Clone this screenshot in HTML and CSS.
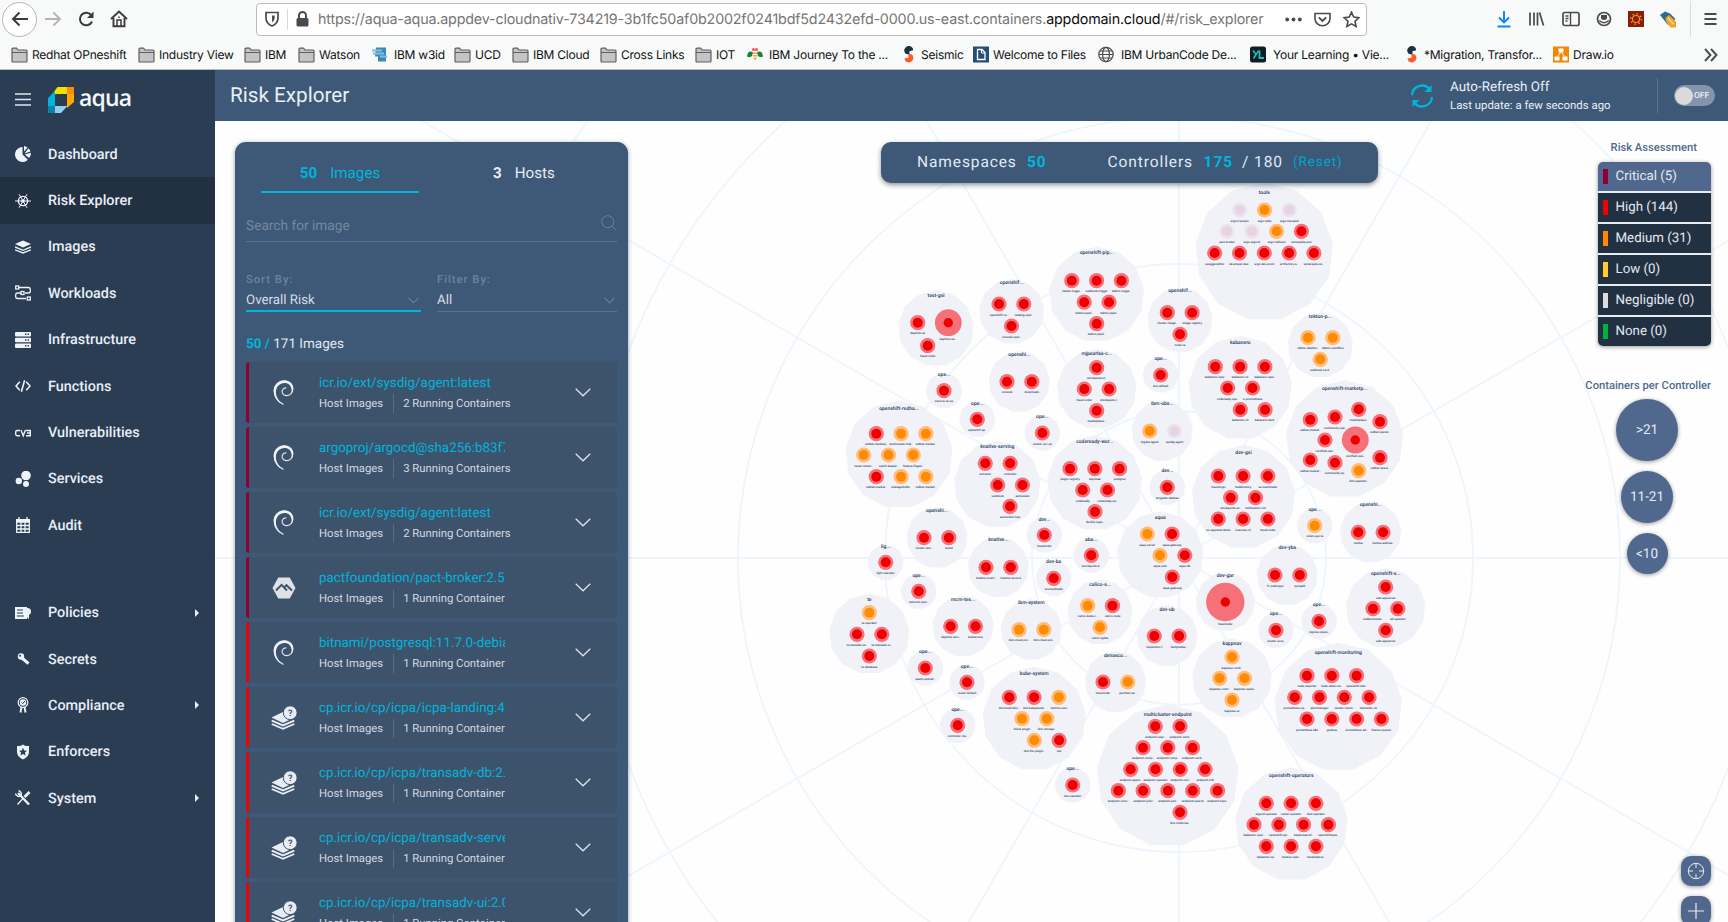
FILE: index.html
```html
<!DOCTYPE html>
<html lang="en">
<head>
<meta charset="utf-8">
<title>Risk Explorer</title>
<link rel="stylesheet" href="styles.css">
</head>
<body>
<svg class="defs" width="0" height="0" aria-hidden="true">
  <symbol id="i-folder" viewBox="0 0 17 16"><path d="M1 14V2.2Q1 1.2 2 1.2H5.6L7 3H15Q16 3 16 4V14Q16 15 15 15H2Q1 15 1 14Z" fill="#c4c4c4" stroke="#5f5f5f" stroke-width="1.2"/><path d="M1 5.5H16" stroke="#5f5f5f"/></symbol>
  <symbol id="i-seismic" viewBox="0 0 17 18"><path d="M13 4.5A4.8 4.8 0 1 0 5 8.3L9 9.2V5.5Z" fill="#1a3048"/><path d="M3.6 13.3A4.8 4.8 0 1 0 11.2 8.8L8 8.6V12.5Z" fill="#ff5a26"/></symbol>
  <symbol id="i-chev" viewBox="0 0 16 9"><path d="M.7.7 8 7.8 15.3.7" fill="none" stroke="currentColor" stroke-width="1.2"/></symbol>
  <symbol id="i-debian" viewBox="0 0 21 25"><path d="M10.500 24.500C3.800 21.500.600 15 1.400 9 2.300 3.500 7.500.300 12.500 1c4.500.600 7.500 4 7.300 8-.300 4-3 7-6.800 6.600-3-.400-4.500-3-3.600-5.400.700-1.800 2.300-2.500 4-2.200" fill="none" stroke="#dfe5ee" stroke-width="1.100"/><path d="M10.500 24.700C3.500 22 .200 15.500.800 9.300 1.600 3.500 7 0 12.500.500c5 .600 8 4.200 7.700 9-.300 2.500-1.300 4.300-2.400 5.200.700-1.500 1-3.200.800-5C18.200 5.500 15.500 2.900 11.600 2.900 6.500 3 3.200 6.800 2.900 11.500 2.700 17 5.800 21.800 10.500 24.700Z" fill="#eef2f7"/></symbol>
  <symbol id="i-alpine" viewBox="0 0 24 22"><path d="M6.300.5H17.700L23.500 11 17.700 21.500H6.300L.500 11Z" fill="#dfe2e6"/><path d="M4 13.500 9.500 7.800 15 13.500M12.500 10.200 14.500 8.200 20 13.500" fill="none" stroke="#3c5269" stroke-width="1.900"/></symbol>
  <symbol id="i-stackq" viewBox="0 0 26 24"><path d="M.500 11.500 12 6 23.500 11.500 12 17Z" fill="#e8edf5"/><path d="M.700 14.600 12 19.400 23.300 14.600M.700 18 12 22.800 23.300 18" fill="none" stroke="#e8edf5" stroke-width="1.900"/><circle cx="19.200" cy="6.700" r="6.900" fill="#e8edf5" stroke="#3c5269" stroke-width="1"/><text x="19.200" y="10" class="q-mark">?</text></symbol>
</svg>

<header class="browser">
  <div class="nav-row">
    <span class="back"><svg width="18" height="16" viewBox="0 0 18 16"><path d="M17 8H2M8.500 1.500 2 8 8.500 14.500" fill="none" stroke="#3b3b3b" stroke-width="2"/></svg></span>
    <svg class="fwd" width="18" height="16" viewBox="0 0 18 16"><path d="M1 8H16M9.500 1.500 16 8 9.500 14.500" fill="none" stroke="#b4b4b4" stroke-width="1.800"/></svg>
    <svg class="reload" width="17" height="16" viewBox="0 0 17 16"><path d="M13.500 4.500A6.300 6.300 0 1 0 14 10.500" fill="none" stroke="#3b3b3b" stroke-width="2"/><path d="M15.500.500V7H9Z" fill="#3b3b3b"/></svg>
    <svg class="home" width="18" height="18" viewBox="0 0 18 18"><path d="M1 9 9 1.500 17 9M3.500 8V16.200H14.500V8" fill="none" stroke="#3b3b3b" stroke-width="1.900"/><path d="M7 16V10H11V16M9 6.500V8" stroke="#3b3b3b" stroke-width="1.500" fill="none"/></svg>
    <div class="url-box">
      <svg class="shield" width="14" height="16" viewBox="0 0 14 16"><path d="M1 1.500H13V7Q13 12.500 7 15 1 12.500 1 7Z" fill="none" stroke="#4a4a4a" stroke-width="1.700"/><path d="M7 4.500V11.500Q9.700 9.500 9.700 7V4.500Z" fill="#4a4a4a"/></svg>
      <span class="url-sep"></span>
      <svg class="lock" width="13" height="16" viewBox="0 0 13 16"><rect x=".5" y="7" width="12" height="8.500" rx="1.500" fill="#4a4a4a"/><path d="M3 8V4.500a3.500 3.500 0 0 1 7 0V8" fill="none" stroke="#4a4a4a" stroke-width="2"/></svg>
      <span class="url">https://aqua-aqua.appdev-cloudnativ-734219-3b1fc50af0b2002f0241bdf5d2432efd-0000.us-east.containers.<b>appdomain.cloud</b>/#/risk_explorer</span>
      <span class="url-tools">
        <svg width="17" height="5" viewBox="0 0 17 5"><g fill="#4a4a4a"><circle cx="2.200" cy="2.500" r="1.900"/><circle cx="8.500" cy="2.500" r="1.900"/><circle cx="14.800" cy="2.500" r="1.900"/></g></svg>
        <svg width="17" height="15" viewBox="0 0 17 15"><path d="M1 1.500H16V6.500A7.500 7.300 0 0 1 1 6.500Z" fill="none" stroke="#4a4a4a" stroke-width="1.600"/><path d="M4.800 5.300 8.500 9 12.200 5.300" fill="none" stroke="#4a4a4a" stroke-width="1.900"/></svg>
        <svg width="17" height="17" viewBox="0 0 17 17"><path d="M8.500 1.300 10.700 6.100 15.900 6.700 12 10.200 13.100 15.400 8.500 12.800 3.900 15.400 5 10.200 1.100 6.700 6.300 6.100Z" fill="none" stroke="#4a4a4a" stroke-width="1.600"/></svg>
      </span>
    </div>
    <div class="ext">
      <svg width="16" height="18" viewBox="0 0 16 18"><path d="M8 1V12M3 7.500 8 12.500 13 7.500M1.500 16.500H14.500" fill="none" stroke="#0a84ff" stroke-width="1.900"/></svg>
      <svg width="17" height="16" viewBox="0 0 17 16"><path d="M2 1.500V14.500M6 1.500V14.500M9.500 1.500V14.500M11.500 1.500 15.500 14.500" fill="none" stroke="#4a4a4a" stroke-width="1.700"/></svg>
      <svg width="18" height="16" viewBox="0 0 18 16"><rect x="1" y="1.500" width="16" height="13" rx="1.800" fill="none" stroke="#4a4a4a" stroke-width="1.700"/><path d="M8.500 1.500V14.500M3.500 5H6.500M3.500 7.500H6.500M3.500 10H5.500" stroke="#4a4a4a" stroke-width="1.400"/></svg>
      <svg width="16" height="16" viewBox="0 0 16 16"><circle cx="8" cy="8" r="6.500" fill="none" stroke="#4a4a4a" stroke-width="1.700"/><path d="M5 4H11V6.500Q11 9 8 9 5 9 5 6.500Z" fill="#4a4a4a"/><path d="M3.300 9.500Q8 14 12.700 9.500" fill="none" stroke="#4a4a4a" stroke-width="1.300"/></svg>
      <svg width="16" height="16" viewBox="0 0 16 16"><rect width="16" height="16" fill="#8a1c08"/><circle cx="8" cy="8" r="3.500" fill="none" stroke="#e8902a" stroke-width="1.200"/><circle cx="8" cy="8" r="5.200" fill="none" stroke="#e8902a" stroke-width="1.800" stroke-dasharray="1.300 2.780"/></svg>
      <svg width="17" height="17" viewBox="0 0 17 17"><path d="M0 4 5 .500 10 2.500 15.500 8 8 14Z" fill="#2e6c8f"/><path d="M5.500 7 9 4 16 10.500V16.500H10.500Q5.500 11 5.500 7Z" fill="#f3a32c"/><path d="M8 7 13.500 13" stroke="#fbd88a" stroke-width="1.500"/></svg>
      <span class="ext-sep"></span>
      <svg width="13" height="14" viewBox="0 0 13 14"><path d="M.500 2H12.500M.500 7H12.500M.500 12H12.500" stroke="#4a4a4a" stroke-width="1.900"/></svg>
    </div>
  </div>
  <nav class="bookmarks">
    <span><svg class="fold"><use href="#i-folder"/></svg>Redhat OPneshift</span>
    <span><svg class="fold"><use href="#i-folder"/></svg>Industry View</span>
    <span><svg class="fold"><use href="#i-folder"/></svg>IBM</span>
    <span><svg class="fold"><use href="#i-folder"/></svg>Watson</span>
    <span><svg class="fav w3" viewBox="0 0 16 16"><path d="M4 1H14V15H6V10H3Z" fill="#3f87b5"/><path d="M0 4H10M1 7H12M8 10H15" stroke="#7fc0e6" stroke-width="2"/></svg>IBM w3id</span>
    <span><svg class="fold"><use href="#i-folder"/></svg>UCD</span>
    <span><svg class="fold"><use href="#i-folder"/></svg>IBM Cloud</span>
    <span><svg class="fold"><use href="#i-folder"/></svg>Cross Links</span>
    <span><svg class="fold"><use href="#i-folder"/></svg>IOT</span>
    <span><svg class="fav bee" viewBox="0 0 16 16"><path d="M6 6Q1 3 0 10Q4 12 6 8ZM10 6Q15 3 16 10Q12 12 10 8Z" fill="#198038"/><path d="M5.500 6H10.500L10 11 8 14 6 11Z" fill="#f4a545"/><path d="M5.500 8H10.500M6 10.500H10" stroke="#fff"/><circle cx="6.500" cy="3" r="1.600" fill="#ee5a5a"/><circle cx="9.500" cy="3" r="1.600" fill="#ee5a5a"/></svg>IBM Journey To the ...</span>
    <span><svg class="fav"><use href="#i-seismic"/></svg>Seismic</span>
    <span><svg class="fav wf" viewBox="0 0 16 16"><rect width="16" height="16" fill="#255074"/><path d="M4.500 3H9L12 6V13H4.500Z" fill="none" stroke="#fff" stroke-width="1.300"/><path d="M8.500 3V6.500H12" fill="none" stroke="#fff"/></svg>Welcome to Files</span>
    <span><svg class="fav globe" viewBox="0 0 16 16"><g fill="none" stroke="#4a4a4a" stroke-width="1.200"><circle cx="8" cy="8" r="7.200"/><ellipse cx="8" cy="8" rx="3.400" ry="7.200"/><path d="M1 8H15M2 4.500H14M2 11.500H14"/></g></svg>IBM UrbanCode De...</span>
    <span><svg class="fav yl" viewBox="0 0 16 16"><rect width="16" height="16" rx="2.500" fill="#141b24"/><path d="M3 4 6 8 9 4M6 8 3.500 12" fill="none" stroke="#14c4b8" stroke-width="1.600"/><path d="M9.500 4V11.500H14" fill="none" stroke="#14c4b8" stroke-width="1.800"/></svg>Your Learning • Vie...</span>
    <span><svg class="fav"><use href="#i-seismic"/></svg>*Migration, Transfor...</span>
    <span><svg class="fav" viewBox="0 0 16 16"><rect width="16" height="16" fill="#f08705"/><g fill="#fff"><rect x="5.500" y="2" width="5" height="4"/><rect x="1.500" y="10" width="5" height="4"/><rect x="9.500" y="10" width="5" height="4"/></g><path d="M7.500 6 4.500 10M8.500 6 11.500 10" stroke="#fff"/></svg>Draw.io</span>
    <svg class="more" width="14" height="14" viewBox="0 0 14 14"><path d="M1 1 6.500 7 1 13M7 1 12.500 7 7 13" fill="none" stroke="#4a4a4a" stroke-width="1.900"/></svg>
  </nav>
</header>

<div class="app">
  <aside class="side">
    <div class="brand">
      <svg width="16" height="13" viewBox="0 0 16 13"><path d="M0 1H16M0 6.500H16M0 12H16" stroke="#dfe6f0" stroke-width="1.600"/></svg>
      <svg class="logo" width="26" height="26" viewBox="0 0 26 26"><path d="M9.500 0H19V7H8L3 9Z" fill="#f2e200"/><path d="M19 0H26V7H19Z" fill="#ff8c00"/><path d="M19 7H26V15L19 21Z" fill="#ffaa00"/><path d="M0 11 7 4V19H0Z" fill="#00b4d8"/><path d="M0 19H7V26H0Z" fill="#0e7fa6"/><path d="M7 19H19.500L13 26H7Z" fill="#8fd0f2"/></svg>
      <span class="word">aqua</span>
    </div>
    <ul class="menu">
      <li><svg viewBox="0 0 16 16"><path d="M7.500 1V8.500L12.800 13.800A7.500 7.500 0 1 1 7.500 1Z"/><path d="M9 0A7 7 0 0 1 12.500 1.500L9 5.500ZM13.400 2.300A7 7 0 0 1 15.500 5.500L9.500 7.500ZM15.900 6.700A7 7 0 0 1 14 12L9.800 8.500Z"/></svg>Dashboard</li>
      <li class="on"><svg viewBox="0 0 16 16"><circle cx="8" cy="8" r="4.600" fill="none" stroke="#eef2f9" stroke-width="1.400"/><circle cx="8" cy="8" r="1.800"/><path d="M0 8H16M4 1.200 12 14.800M12 1.200 4 14.800" stroke="#eef2f9" stroke-width="1"/></svg>Risk Explorer</li>
      <li><svg viewBox="0 0 16 16"><path d="M0 5 8 1.500 16 5 8 8.500Z"/><path d="M0 8 8 11.300 16 8M0 10.800 8 14 16 10.800" fill="none" stroke="#eef2f9" stroke-width="1.400"/></svg>Images</li>
      <li><svg viewBox="0 0 16 16"><g fill="none" stroke="#eef2f9" stroke-width="1.300"><rect x=".7" y="1" width="3" height="3"/><rect x="6" y="6.500" width="3" height="3"/><rect x="12.300" y="12" width="3" height="3"/><path d="M4 2.500H13.500Q15.300 2.500 15.300 5V6Q15.300 8 13.500 8H10M6 8H2.500Q.700 8 .700 10V11.500Q.700 13.500 2.500 13.500H11"/></g></svg>Workloads</li>
      <li><svg viewBox="0 0 16 16"><rect width="16" height="4.500" rx="1"/><rect y="5.800" width="16" height="4.500" rx="1"/><rect y="11.500" width="16" height="4.500" rx="1"/><path d="M10 2.200H14M10 8H14M10 13.800H14" stroke="#2a3d52" stroke-width="1.400" stroke-dasharray="1.400 1.200"/></svg>Infrastructure</li>
      <li><svg viewBox="0 0 16 16"><path d="M4.800 3.800 1 8 4.800 12.200M11.200 3.800 15 8 11.200 12.200M9.600 2.200 6.400 13.800" fill="none" stroke="#eef2f9" stroke-width="1.600"/></svg>Functions</li>
      <li><svg viewBox="0 0 16 16"><path d="M5 5.500H2Q.700 5.500.700 7V9Q.700 10.700 2 10.700H5M6 5 8.200 10.700 10.400 5M11 5.500H15.300V10.700H11M12 8H15" fill="none" stroke="#eef2f9" stroke-width="1.400"/></svg>Vulnerabilities</li>
      <li><svg viewBox="0 0 16 16"><circle cx="11" cy="4.500" r="4.800"/><circle cx="3.800" cy="10" r="3.200"/><circle cx="11" cy="13" r="3"/></svg>Services</li>
      <li><svg viewBox="0 0 16 16"><path d="M1 2H15V5H1Z"/><path d="M4 0V3M12 0V3M1.700 5H14.300V15.300H1.700Z M2 8.500H14M2 12H14M6 5V15M10 5V15" fill="none" stroke="#eef2f9" stroke-width="1.300"/></svg>Audit</li>
    </ul>
    <ul class="menu second">
      <li><svg viewBox="0 0 16 16"><path d="M0 2H12V14H0Z"/><circle cx="12.500" cy="6.500" r="3.500"/><path d="M11 9H14V14L12.500 13Z"/><path d="M2 5H8M2 8H8M2 11H9" stroke="#2a3d52" stroke-width="1"/></svg>Policies<i class="arr"></i></li>
      <li><svg viewBox="0 0 16 16"><circle cx="6" cy="5.500" r="3.200"/><path d="M7 7 13.500 12.700" stroke="#eef2f9" stroke-width="3"/><circle cx="5" cy="4.800" r="1" fill="#2a3d52"/></svg>Secrets</li>
      <li><svg viewBox="0 0 16 16"><circle cx="8" cy="5.500" r="4.800" fill="none" stroke="#eef2f9" stroke-width="1.200"/><circle cx="8" cy="5.500" r="3.200"/><path d="M6.500 5.500 7.700 6.700 10 4" fill="none" stroke="#2a3d52" stroke-width="1"/><path d="M6.500 10 5.500 15.500M9.500 10 10.500 15.500" stroke="#eef2f9" stroke-width="2"/></svg>Compliance<i class="arr"></i></li>
      <li><svg viewBox="0 0 16 16"><path d="M2 2Q6 2.500 8 .500 10 2.500 14 2V8Q14 13 8 15.500 2 13 2 8Z"/><path d="M8 3.800 9.200 6.500 12 6.700 9.900 8.600 10.600 11.400 8 9.900 5.400 11.400 6.100 8.600 4 6.700 6.800 6.500Z" fill="#2a3d52"/></svg>Enforcers</li>
      <li><svg viewBox="0 0 16 16"><path d="M3 3 14 14.500" stroke="#eef2f9" stroke-width="2.400"/><path d="M2.500 14.500 8 8.500" stroke="#eef2f9" stroke-width="1.300"/><path d="M9.500 7 14.500 2" stroke="#eef2f9" stroke-width="2.800"/><path d="M.500 3.500A3.300 3.300 0 0 0 6 5.500M3.500 .800A3.300 3.300 0 0 1 6 5.500" fill="none" stroke="#eef2f9" stroke-width="1.500"/></svg>System<i class="arr"></i></li>
    </ul>
  </aside>

  <div class="content">
    <header class="bar">
      <h1>Risk Explorer</h1>
      <svg class="sync" width="24" height="24" viewBox="0 0 24 24"><path d="M2 11A10 10 0 0 1 19.500 5M22 13A10 10 0 0 1 4.500 19" fill="none" stroke="#00b4dc" stroke-width="2.300"/><path d="M21.500 1V8H14.500ZM2.500 23V16H9.500Z" fill="#00b4dc"/></svg>
      <div class="sync-text"><div class="l1">Auto-Refresh Off</div><div class="l2">Last update: a few seconds ago</div></div>
      <div class="toggle-wrap"><span class="toggle"><i></i>OFF</span></div>
    </header>

    <main class="stage">
      <svg id="map" class="map" viewBox="215 121 1513 801"></svg>

      <section class="panel">
        <div class="tabs">
          <span class="tab act"><b>50</b>Images</span>
          <span class="tab"><b>3</b>Hosts</span>
        </div>
        <div class="search">Search for image
          <svg width="16" height="16" viewBox="0 0 16 16"><circle cx="6.700" cy="6.700" r="6" fill="none" stroke="#6a819a"/><path d="M11 11 15.500 15.500" stroke="#6a819a"/></svg>
        </div>
        <div class="selects">
          <div class="sel hot"><label>Sort By:</label><div>Overall Risk<svg class="sc"><use href="#i-chev"/></svg></div></div>
          <div class="sel"><label>Filter By:</label><div>All<svg class="sc"><use href="#i-chev"/></svg></div></div>
        </div>
        <div class="count"><b>50 /</b> 171 Images</div>
        <div class="cards">
          <article class="card crit"><svg class="deb"><use href="#i-debian"/></svg><div class="info"><div class="nm">icr.io/ext/sysdig/agent:latest</div><div class="sub"><span>Host Images</span><span>2 Running Containers</span></div></div><svg class="cv"><use href="#i-chev"/></svg></article>
          <article class="card crit"><svg class="deb"><use href="#i-debian"/></svg><div class="info"><div class="nm">argoproj/argocd@sha256:b83f7</div><div class="sub"><span>Host Images</span><span>3 Running Containers</span></div></div><svg class="cv"><use href="#i-chev"/></svg></article>
          <article class="card crit"><svg class="deb"><use href="#i-debian"/></svg><div class="info"><div class="nm">icr.io/ext/sysdig/agent:latest</div><div class="sub"><span>Host Images</span><span>2 Running Containers</span></div></div><svg class="cv"><use href="#i-chev"/></svg></article>
          <article class="card crit"><svg class="alp"><use href="#i-alpine"/></svg><div class="info"><div class="nm">pactfoundation/pact-broker:2.5</div><div class="sub"><span>Host Images</span><span>1 Running Container</span></div></div><svg class="cv"><use href="#i-chev"/></svg></article>
          <article class="card high"><svg class="deb"><use href="#i-debian"/></svg><div class="info"><div class="nm">bitnami/postgresql:11.7.0-debian</div><div class="sub"><span>Host Images</span><span>1 Running Container</span></div></div><svg class="cv"><use href="#i-chev"/></svg></article>
          <article class="card high"><svg class="stk"><use href="#i-stackq"/></svg><div class="info"><div class="nm">cp.icr.io/cp/icpa/icpa-landing:4</div><div class="sub"><span>Host Images</span><span>1 Running Container</span></div></div><svg class="cv"><use href="#i-chev"/></svg></article>
          <article class="card high"><svg class="stk"><use href="#i-stackq"/></svg><div class="info"><div class="nm">cp.icr.io/cp/icpa/transadv-db:2.</div><div class="sub"><span>Host Images</span><span>1 Running Container</span></div></div><svg class="cv"><use href="#i-chev"/></svg></article>
          <article class="card high"><svg class="stk"><use href="#i-stackq"/></svg><div class="info"><div class="nm">cp.icr.io/cp/icpa/transadv-serve</div><div class="sub"><span>Host Images</span><span>1 Running Container</span></div></div><svg class="cv"><use href="#i-chev"/></svg></article>
          <article class="card high"><svg class="stk"><use href="#i-stackq"/></svg><div class="info"><div class="nm">cp.icr.io/cp/icpa/transadv-ui:2.0</div><div class="sub"><span>Host Images</span><span>1 Running Container</span></div></div><svg class="cv"><use href="#i-chev"/></svg></article>
        </div>
      </section>

      <div class="summary"><span class="s-ns">Namespaces</span><b>50</b><span class="s-ct">Controllers</span><b>175</b><span class="s-tot">/ 180</span><a>(Reset)</a></div>

      <section class="legend">
        <div class="lg-title risk">Risk Assessment</div>
        <ul class="levels">
          <li class="sel-lv"><i class="c1"></i>Critical (5)</li>
          <li><i class="c2"></i>High (144)</li>
          <li><i class="c3"></i>Medium (31)</li>
          <li><i class="c4"></i>Low (0)</li>
          <li><i class="c5"></i>Negligible (0)</li>
          <li><i class="c6"></i>None (0)</li>
        </ul>
        <div class="lg-title">Containers per Controller</div>
        <div class="sizes"><span class="z1">&gt;21</span><span class="z2">11-21</span><span class="z3">&lt;10</span></div>
        <div class="tools">
          <span><svg width="18" height="18" viewBox="0 0 18 18"><circle cx="9" cy="9" r="7.700" fill="none" stroke="#e6ecf5"/><path d="M9 1V6M9 12V17M1 9H6M12 9H17" stroke="#e6ecf5"/></svg></span>
          <span><svg width="16" height="16" viewBox="0 0 16 16"><path d="M8 0V16M0 8H16" stroke="#e6ecf5" stroke-width="1.200"/></svg></span>
        </div>
      </section>
    </main>
  </div>
</div>
<script src="map.js"></script>
</body>
</html>
```

FILE: styles.css
```css
* { box-sizing: border-box; }
body { margin: 0; width: 1728px; height: 922px; overflow: hidden; font-family: Roboto, "Liberation Sans", sans-serif; background: #fefefe; text-rendering: geometricPrecision; }
ul { list-style: none; margin: 0; padding: 0; }
.defs { position: absolute; }
svg { display: block; flex: none; }

/* browser chrome */
.browser { height: 70px; background: #f8f9f9; border-bottom: 1px solid #b9bcc0; font-family: Inter, "Liberation Sans", sans-serif; }
.nav-row { display: flex; align-items: center; height: 38px; padding-left: 2px; }
.back { width: 35px; height: 35px; border: 1px solid #b5b5b5; border-radius: 50%; background: #fff; display: flex; align-items: center; justify-content: center; }
.fwd { margin-left: 7px; }
.reload { margin-left: 16px; }
.home { margin-left: 15px; }
.url-box { margin-left: 128px; width: 1111px; height: 33px; border: 1px solid #bcbcbc; border-radius: 4px; background: #fff; display: flex; align-items: center; }
.shield { margin-left: 8px; }
.url-sep { width: 1px; height: 21px; background: #d8d8d8; margin: 0 8px; }
.url { margin-left: 9px; width: 967px; padding-top: 1px; font-size: 14.300px; color: #757575; white-space: nowrap; letter-spacing: -.175px; }
.url b { font-weight: 400; color: #0c0c0d; }
.url-tools { display: flex; align-items: center; gap: 12px; }
.ext { display: flex; align-items: center; margin-left: 129px; gap: 16.300px; }
.ext-sep { width: 1px; height: 36px; background: #dcdcdc; margin: 0 -3px 0 -4px; }
.bookmarks { display: grid; grid-template-columns: 127px 106px 54px 74px 82px 58px 88px 95px 52px 154px 72px 125px 152px 154px 149px 156px 20px; height: 31px; align-items: center; padding: 2px 0 0 11px; font-size: 12px; color: #111; letter-spacing: -.24px; }
.bookmarks span { display: flex; align-items: center; gap: 4px; white-space: nowrap; }
.bookmarks .more { margin-left: -5px; }
.fold { width: 17px; height: 16px; }
.fav { width: 16px; height: 17px; }
.globe, .yl { margin-right: 3px; }
.bee, .w3 { margin-right: 2px; }

/* shell */
.app { display: flex; height: 852px; }
.side { width: 215px; background: #2a3d52; flex: none; }
.brand { height: 61px; display: flex; align-items: center; padding: 0 0 2px 15px; }
.logo { margin-left: 17px; }
.word { margin: -5px 0 0 5px; color: #f4f7fb; font: 600 23px/26px "Open Sans", sans-serif; letter-spacing: -.8px; }
.menu li { height: 46.400px; display: flex; align-items: center; padding-left: 15px; font-size: 14.400px; font-weight: 500; color: #e9eef7; }
.menu li svg { width: 16px; height: 16px; fill: #eef2f9; margin-right: 17px; }
.menu .on { background: #223142; }
.menu.second { margin-top: 41px; }
.arr { margin: 0 16px 0 auto; border: 4px solid transparent; border-left: 4px solid #e9eef7; border-right: 0; }

.content { flex: 1; display: flex; flex-direction: column; }
.bar { height: 51px; background: #3d5977; display: flex; align-items: center; color: #e9eef6; }
.bar h1 { margin: 0; padding: 1px 0 0 15px; font-size: 20.700px; font-weight: 400; width: 1195px; }
.sync-text { margin-left: 16px; width: 207px; padding-top: 2px; }
.l1 { font-size: 13.400px; line-height: 17px; }
.l2 { font-size: 11.400px; line-height: 18px; }
.toggle-wrap { height: 35px; border-left: 1px solid #5c7690; padding-left: 16px; display: flex; align-items: center; }
.toggle { width: 41px; height: 21px; border-radius: 11px; background: #8494ab; display: flex; align-items: center; font-size: 8.500px; gap: 1px; font-weight: 500; color: #e8edf4; }
.toggle i { width: 18px; height: 18px; border-radius: 50%; background: #dadada; margin-left: 1px; }

.stage { position: relative; flex: 1; display: flex; align-items: flex-start; padding: 21px 17px 0 20px; overflow: hidden; }
.map { position: absolute; inset: 0; width: 1513px; height: 801px; }
.panel, .summary, .legend { position: relative; }

/* image panel */
.panel { width: 393px; height: 800px; background: #3d5977; border-radius: 11px; padding: 0 11px 0 11px; box-shadow: 0 1px 4px rgba(40,60,90,.5); }
.tabs { display: flex; padding-left: 15px; height: 51px; }
.tab { width: 158px; height: 51px; margin-right: 40px; text-align: center; line-height: 62px; font-size: 15.200px; color: #e8edf5; }
.tab + .tab { width: 158px; margin-right: 0; text-align: left; padding-left: 34px; }
.tab b { margin-right: 13px; font-weight: 700; }
.tab.act { color: #00b4dc; border-bottom: 2px solid #00b4dc; }
.search { height: 49px; border-bottom: 1px solid #5a738d; display: flex; justify-content: space-between; align-items: flex-end; padding-bottom: 7px; font-size: 13.700px; color: #7488a0; margin-bottom: 27px; }
.search svg { margin-bottom: 3px; }
.selects { display: flex; gap: 16px; }
.sel { width: 180px; border-bottom: 1px solid #5a738d; height: 43px; }
.sel.hot { width: 175px; border-bottom: 2px solid #00b4dc; }
.sel label { display: block; font-size: 11.200px; letter-spacing: 1px; line-height: 21px; color: #6d8299; font-weight: 500; }
.sel div { display: flex; justify-content: space-between; align-items: center; font-size: 13.300px; line-height: 21px; color: #d5dce6; padding-right: 2px; }
.sc { width: 11px; height: 7px; color: #8fa1b5; }
.count { margin-top: 20px; line-height: 24px; font-size: 13.500px; color: #e3e9f1; }
.count b { color: #00b4dc; font-weight: 700; }
.cards { display: flex; flex-direction: column; gap: 4px; margin-top: 6px; }
.card { height: 61px; background: #3d536b; border-left: 3px solid #8e0038; border-radius: 3px; display: flex; align-items: center; flex: none; }
.card.high { border-left-color: #f00000; }
.deb { width: 21px; height: 25px; margin: 0 auto 0 24px; }
.alp { width: 24px; height: 22px; margin: 0 auto 0 23px; }
.stk { width: 26px; height: 24px; margin: 0 auto 0 22px; }
.info { width: 251px; padding-top: 2px; }
.nm { width: 186px; overflow: hidden; white-space: nowrap; color: #00b4dc; font-size: 13.400px; line-height: 20px; }
.sub { display: flex; font-size: 11.300px; line-height: 19px; color: #d3d9e1; }
.sub span + span { border-left: 1px solid #596d83; margin-left: 10px; padding-left: 9px; }
.cv { width: 16px; height: 9px; color: #dfe6ef; margin: 0 26px 0 5px; }
.q-mark { font: 700 9px Roboto, sans-serif; fill: #3c5269; text-anchor: middle; }

/* totals */
.summary { margin-left: 253px; width: 497px; height: 41px; background: #3d5977; border-radius: 10px; box-shadow: 0 2px 5px rgba(30,40,60,.5); display: flex; align-items: center; padding: 0 0 2px 36px; color: #e3e9f2; font-size: 15.500px; letter-spacing: .9px; white-space: nowrap; flex: none; }
.summary b { color: #00b4dc; font-weight: 700; }
.s-ns { width: 110px; }
.s-ct { margin-left: 61px; width: 96px; }
.s-tot { margin-left: 9px; width: 51px; }
.summary a { color: #00a5cc; font-size: 13.500px; }

/* legend */
.legend { margin-left: auto; display: flex; flex-direction: column; align-items: flex-end; }
.lg-title { font-size: 11.200px; line-height: 14px; color: #506a90; font-weight: 500; white-space: nowrap; }
.risk { margin: -1px 14px 7px 0; }
.levels { width: 113px; margin-right: .5px; border-radius: 5px; overflow: hidden; box-shadow: 0 1px 4px rgba(0,0,0,.4); margin-bottom: 33px; background: #e8edf3; display: flex; flex-direction: column; gap: 2px; }
.levels li { height: 29px; background: #223142; color: #e3e9f2; font-size: 13.300px; display: flex; align-items: center; padding: 0 0 1px 5px; }
.levels .sel-lv { background: #50688d; }
.levels i { width: 5px; height: 15px; margin: 1px 8px 0 0; }
.c1 { background: #8e0038; } .c2 { background: #f00000; } .c3 { background: #ff8800; }
.c4 { background: #ffcc33; } .c5 { background: #dcdcdc; } .c6 { background: #00b140; }
.sizes { display: flex; flex-direction: column; align-items: center; gap: 10px; width: 128px; margin-top: 6px; }
.sizes span { border-radius: 50%; background: #50688d; color: #e3e9f2; font-size: 13.500px; display: flex; align-items: center; justify-content: center; box-shadow: 0 1px 4px rgba(0,0,0,.4); }
.z1 { width: 62px; height: 62px; } .z2 { width: 52px; height: 52px; } .z3 { width: 41px; height: 41px; }
.tools { margin-top: 282px; display: flex; flex-direction: column; gap: 10px; }
.tools span { width: 30px; height: 30px; border-radius: 10px; background: #50688d; display: flex; align-items: center; justify-content: center; box-shadow: 0 1px 4px rgba(0,0,0,.4); }

/* map */
.grid { fill: none; stroke: #edf5fd; stroke-width: 1.800; }
.ns { fill: #f1f2f8; }
.ns-name { font: 500 5px Roboto, sans-serif; fill: #1d3a5a; text-anchor: middle; }
.ctl-name { font: 500 3px Roboto, sans-serif; fill: #1d3a5a; text-anchor: middle; }
.r .halo { fill: #f6707a; } .r .core { fill: #ef0000; }
.o .halo { fill: #ffbb77; } .o .core { fill: #ff8c00; }
.g .halo { fill: #ebe3ed; } .g .core { fill: #e6d4e4; }
```

FILE: map.js
```js
// name, centre x, centre y, radius, label y, rows of [x, y, colours, controller names, halo radius]
const namespaces = [
  ["test-gsi", 936, 328.3, 38, 295, [[917.7, 322.7, "r", "daytime-se"], [948.3, 322.7, "r", "daytime-se...", 13.4], [927.7, 345.7, "r", "travel-order"]]],
  ["openshif...", 1011.7, 311.7, 32.7, 282.3, [[999, 304, "rr", "openshift-cu..|catalog-oper.."], [1011.5, 326, "r", "console-oper.."]]],
  ["openshift-pip...", 1096.7, 294.5, 47.7, 252.7, [[1071.8, 280.7, "rrr", "tekton-trigge..|webhook-trigger|tekton-trigge.."], [1084.2, 302.2, "rr", "tekton-pipel..|tekton-pipel.."], [1096.7, 323.7, "r", "tekton-pipel.."]]],
  ["ope...", 944, 390.7, 18, 374.3, [[944, 390.7, "r", "service-ca-op"]]],
  ["openshi...", 1019.3, 381.7, 30.7, 354.3, [[1007, 381.7, "rr", "console|downloads"]]],
  ["mjpearlsa-c...", 1096.7, 389, 40, 353.3, [[1096.7, 367.7, "r", "stockquote-d.."], [1084.3, 389, "rr", "travel-order|stockquote-l.."], [1096.7, 410.7, "r", "marketplace.."]]],
  ["ope...", 977.3, 419.3, 18, 403, [[977.3, 419.3, "r", "openshift-ap.."]]],
  ["ope...", 1042.3, 433, 18, 416, [[1042.3, 433, "r", "cluster-svc-op"]]],
  ["openshift-redha...", 899, 454.7, 54, 408.3, [[876.3, 433.7, "roo", "redhat-marketp..|multicluster-hub..|redhat-market.."], [863.7, 455, "ooo", "razee-meteri..|watch-keeper..|feature-flagse.."], [876.3, 476.7, "roo", "redhat-market..|managed-k8s..|redhat-market.."]]],
  ["knative-serving", 997.3, 484.5, 43.5, 446.3, [[985.3, 463.3, "rr", "activator|controller"], [997.7, 485, "rr", "webhook|autoscaler"], [1010, 506.3, "r", "autoscaler-hpa"]]],
  ["codeready-wor...", 1094.7, 483, 47.7, 441, [[1070, 468.7, "rrr", "plugin-registry|keycloak|postgres"], [1082.7, 490, "rr", "codeready|codeready-op.."], [1095, 511.7, "r", "devfile-regis.."]]],
  ["tools", 1264.3, 252, 69.3, 192.7, [[1239.7, 210, "gog", "argo-tracepro|argo-redis|argo-tracesub"], [1227, 231.3, "ggor", "pact-broker|argo-argocd|argo-helloare|sonarqube-pos"], [1214.7, 253, "rrrrr", "swaggereditor|developer-das..|argo-dex-prom|artifactory-a..|sonarqube-so.."]]],
  ["openshif...", 1180, 320, 32.7, 290.7, [[1167.3, 312.7, "rr", "cluster-image..|image-registry"], [1180, 334.3, "r", "node-ca"]]],
  ["tekton-p...", 1320.3, 345.3, 32.7, 316, [[1308, 337.7, "oo", "tekton-dashbo..|tekton-workflow"], [1320.3, 359.3, "o", "webhook-se-d.."]]],
  ["kabanero", 1240.3, 388, 52, 342.7, [[1215.3, 366.7, "rrr", "kabanero-oper..|kabanero-cli|kabanero-oper.."], [1227.7, 388, "rr", "codeready-ope..|ic-prometheus"], [1240.3, 409.7, "rr", "kabanero-cli|kabanero-land.."]]],
  ["ope...", 1160.7, 375, 18, 358.3, [[1160.7, 375, "r", "dns-default"]]],
  ["ibm-obs...", 1162.3, 431, 30.7, 403.7, [[1149.7, 431, "og", "logdna-agent|sysdig-agent"]]],
  ["openshift-marketp...", 1344.7, 439.3, 59, 388.3, [[1358.7, 409.3, "r", "marketplace.."], [1335, 417, "r", "community-ope.."], [1310.3, 419.7, "r", "redhat-market.."], [1380, 421.7, "r", "redhat-operat.."], [1325, 440, "r", "certified-ope.."], [1355.3, 440, "r", "certified-ope..", 13.4], [1310.3, 460, "r", "redhat-market.."], [1335, 462.7, "r", "community-op.."], [1380, 457.7, "r", "redhat-opera.."], [1358.7, 470.7, "o", "ibm-operator.."]]],
  ["dev...", 1167.3, 487.3, 18, 470.3, [[1167.3, 487.3, "r", "tungsten-tableau"]]],
  ["dev-gsi", 1243.5, 497, 52, 452.3, [[1218.3, 476, "rrr", "travelorgsi|tradehistory|accounttrader"], [1230.7, 497.7, "rr", "stockquote-se..|notification-rmi"], [1218.3, 519, "rrr", "ics-appmod-demo|icanview-nf|travel-order"]]],
  ["openshi...", 937, 537.7, 30.7, 510.3, [[924, 537.7, "rr", "cluster-stor..|tuned"]]],
  ["lig...", 885.7, 562.3, 18, 546.3, [[885.7, 562.3, "r", "light-operator"]]],
  ["ope...", 918.7, 591.3, 18, 575, [[918.7, 591.3, "r", "network-oper.."]]],
  ["knative...", 998.3, 567.3, 30.7, 539.7, [[986, 567.3, "rr", "knative-event..|knative-service"]]],
  ["dev...", 1044.3, 535, 18, 519, [[1044.3, 535, "r", "travelorder"]]],
  ["dev-ba", 1053.7, 578.3, 18, 561.3, [[1053.7, 578.3, "r", "accounttrade"]]],
  ["aba...", 1091.3, 555.3, 18, 539, [[1091.3, 555.3, "r", "stockquote-d.."]]],
  ["calico-s...", 1100, 612.3, 32.7, 584, [[1087.7, 605.7, "or", "calico-kube-c..|calico-node"], [1100, 627.3, "o", "calico-typha"]]],
  ["te", 869.3, 634, 40.3, 599, [[869.3, 612.7, "o", "te-operator"], [857, 634.3, "rr", "te-transadv-se..|te-transadv-ui.."], [869.3, 656, "r", "te-database"]]],
  ["mcm-tes...", 963, 626.3, 30.7, 599, [[950.7, 626.3, "rr", "daytime-serv..|testservice"]]],
  ["ibm-system", 1031.3, 629.7, 30.7, 602, [[1019, 629.7, "oo", "ibm-cloud-pro..|ibm-cloud-pro.."]]],
  ["ope...", 925.3, 668, 18, 651.7, [[925.3, 668, "r", "oauth-opensh.."]]],
  ["ope...", 967, 682.3, 18, 666, [[967, 682.3, "r", "router-default"]]],
  ["ope...", 957.7, 725.3, 18, 709, [[957.7, 725.3, "r", "controller-ma.."]]],
  ["kube-system", 1034.3, 718.7, 52, 673.7, [[1009.3, 697.3, "rro", "ibmcloud-bloc..|ibm-keepalived..|metrics-serv"], [1022, 718.7, "oo", "block-plugin|ibm-storage.."], [1034.3, 740.3, "or", "ibm-file-plugin..|vpn"]]],
  ["ope...", 1072.7, 785, 18, 768.3, [[1072.7, 785, "r", "dns-operator"]]],
  ["denasco...", 1115.5, 682, 30.7, 655, [[1103, 682, "ro", "travelorder|pacttest-se.."]]],
  ["aqua", 1160.3, 555, 43.5, 517.3, [[1147.3, 534, "or", "aqua-server|aqua-gateway"], [1160, 555.3, "or", "aqua-web|aqua-db"], [1172.3, 577, "r", "aqua-gateway"]]],
  ["dev-gar", 1225.3, 602, 29.7, 575.3, [[1225.3, 602, "r", "travelorder", 19.2]]],
  ["dev-ub", 1167, 636, 30.7, 609, [[1154.3, 636, "rr", "inspection-f|dailytrades.."]]],
  ["dev-ybs", 1287.3, 575, 30.7, 547.7, [[1275, 575, "rr", "f1-ordertype|tyropath"]]],
  ["ope...", 1314.7, 525.7, 18, 509.3, [[1314.7, 525.7, "o", "velero-gui-la"]]],
  ["openshi...", 1370.7, 532.3, 30.7, 504.7, [[1358.3, 532.3, "rr", "multus|multus-admiss.."]]],
  ["openshift-s...", 1385.7, 608.3, 40, 573, [[1385.7, 587, "r", "web-appserver"], [1373, 608.7, "rr", "webterminals..|iaf-operator"], [1385.7, 630.3, "r", "web-appserver"]]],
  ["ope...", 1276, 630.3, 18, 613.7, [[1276, 630.3, "r", "cluster-svca.."]]],
  ["ope...", 1319, 621.3, 18, 604.7, [[1319, 621.3, "r", "ingress-opera.."]]],
  ["kappnav", 1232, 678.3, 40, 643.3, [[1232, 657, "o", "kappnav-contr.."], [1219.7, 678.3, "oo", "kappnav-contr..|kappnav-opera.."], [1232, 700, "o", "kappnav-ui"]]],
  ["openshift-monitoring", 1338.3, 707, 64.3, 652.3, [[1307, 675.7, "rrr", "node-exporter|kube-state-me..|openshift-stat.."], [1294.7, 697.3, "rrrr", "prometheus-op..|alertmanager|cluster-monit..|telemeter-cli.."], [1307, 719, "rrrr", "prometheus-k8s|grafana|prometheus-ad..|thanos-querier"]]],
  ["multicluster-endpoint", 1167.7, 775.7, 71.3, 714.3, [[1155.3, 726.3, "rr", "endpoint-sear..|endpoint-work.."], [1143, 747.7, "rrr", "endpoint-comp..|endpoint-comp..|endpoint-work.."], [1130.7, 769.3, "rrrr", "endpoint-appm..|endpoint-operator|endpoint-cert..|endpoint-CIS"], [1118.3, 790.7, "rrrrr", "endpoint-conn..|endpoint-polic|endpoint-poli..|endpoint-search|endpoint-topo.."], [1180, 812.3, "r", "ibm-multiclus.."]]],
  ["openshift-operators", 1291.3, 824.3, 56.7, 775.7, [[1266.3, 803.3, "rrr", "argocd-operator|camel-operator|kiali-operator"], [1254, 824.7, "rrrr", "kabanero-oper..|openshift-pip..|elasticsearch..|openshiftopes.."], [1266.3, 846.3, "rrr", "kabanero-op..|knative-oper..|marketplace.."]]]
];

const NS = "http://www.w3.org/2000/svg";
const map = document.getElementById("map");
const STEP = 24.8;
const CENTER = [1179, 558];

function add(parent, tag, attrs, text) {
  const el = document.createElementNS(NS, tag);
  for (const k in attrs) el.setAttribute(k, attrs[k]);
  if (text) el.textContent = text;
  parent.appendChild(el);
  return el;
}

// radar grid: concentric rings and a spoke every 30 degrees
for (let i = 1; i <= 5; i++) add(map, "circle", { class: "grid", cx: CENTER[0], cy: CENTER[1], r: i * 147 });
for (let a = 0; a < 180; a += 30) {
  const dx = 1000 * Math.cos(a * Math.PI / 180), dy = 1000 * Math.sin(a * Math.PI / 180);
  add(map, "line", { class: "grid", x1: CENTER[0] - dx, y1: CENTER[1] - dy, x2: CENTER[0] + dx, y2: CENTER[1] + dy });
}

for (const [name, cx, cy, r, labelY, rows] of namespaces) {
  const pts = [];
  for (let i = 0; i < 13; i++) {
    const t = i * 2 * Math.PI / 13 - Math.PI / 2;
    pts.push((cx + r * Math.cos(t)).toFixed(1) + "," + (cy + r * Math.sin(t)).toFixed(1));
  }
  add(map, "polygon", { class: "ns", points: pts.join(" ") });
  add(map, "text", { class: "ns-name", x: cx, y: labelY + 1.7 }, name);
  for (const [x0, y, colours, names, halo] of rows) {
    const labels = names.split("|");
    [...colours].forEach((c, i) => {
      const g = add(map, "g", { class: c });
      const x = x0 + i * STEP, h = halo || 7.6;
      add(g, "circle", { class: "halo", cx: x, cy: y, r: h });
      add(g, "circle", { class: "core", cx: x, cy: y, r: halo ? 4.7 : 5 });
      add(g, "text", { class: "ctl-name", x: x, y: y + h + 4 }, labels[i]);
    });
  }
}
```
